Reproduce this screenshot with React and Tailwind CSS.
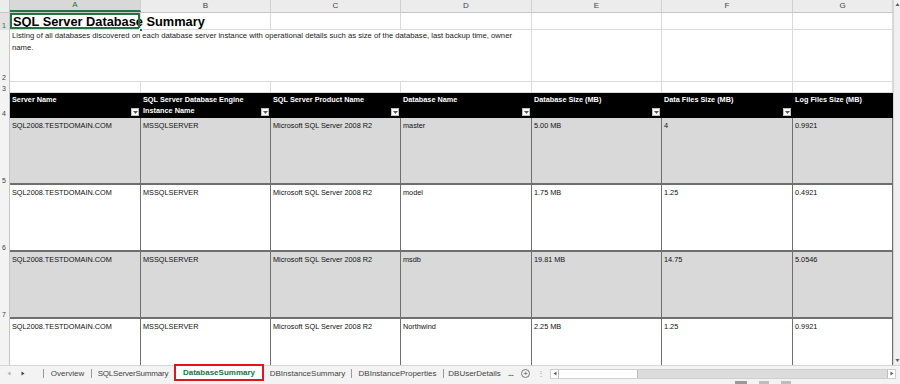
import React from "react";

const W = ["w-[131px]", "w-[130px]", "w-[130px]", "w-[131px]", "w-[130px]", "w-[131px]", "w-[100px]"];
const LETTERS = ["A", "B", "C", "D", "E", "F", "G"];

const HEADERS = [
  ["Server Name"],
  ["SQL Server Database Engine", "Instance Name"],
  ["SQL Server Product Name"],
  ["Database Name"],
  ["Database Size (MB)"],
  ["Data Files Size (MB)"],
  ["Log Files Size (MB)"],
];

const ROWS = [
  { n: 5, gray: true, db: "master", size: "5.00 MB", data: "4", log: "0.9921" },
  { n: 6, gray: false, db: "model", size: "1.75 MB", data: "1.25", log: "0.4921" },
  { n: 7, gray: true, db: "msdb", size: "19.81 MB", data: "14.75", log: "5.0546" },
  { n: 8, gray: false, db: "Northwind", size: "2.25 MB", data: "1.25", log: "0.9921" },
];

function FilterButton() {
  return (
    <div className="absolute right-[2px] bottom-[2px] w-[8px] h-[8px] bg-white border border-[#bfbfbf] flex items-center justify-center">
      <svg width="5" height="3" viewBox="0 0 5 3">
        <path d="M0 0 L5 0 L2.5 3 Z" fill="#595959" />
      </svg>
    </div>
  );
}

function RowNum({ n, h, active }) {
  return (
    <div className={`w-[10px] shrink-0 ${h} flex items-end pl-[2px] pb-[1px] text-[7px] leading-none border-r border-[#c6c6c6] ${active ? "bg-[#e1e1e1] text-[#217346]" : "bg-[#f3f3f3] text-[#444]"}`}>
      {n}
    </div>
  );
}

function BlankRow({ n, h }) {
  return (
    <div className="flex">
      <RowNum n={n} h={h} />
      {W.map((w, i) => (
        <div key={i} className={`${w} ${h} shrink-0 bg-white border-r border-b border-[#dadada]`} />
      ))}
    </div>
  );
}

function Sep() {
  return <div className="h-[9px] border-l border-[#9a9a9a]" />;
}

export default function App() {
  return (
    <div className="w-[900px] h-[384px] overflow-hidden bg-white flex flex-col text-[#000]" style={{ fontFamily: '"Liberation Sans", Arial, sans-serif' }}>
      <div className="flex h-[365px]">
        <div className="flex-1 overflow-hidden flex flex-col">
          {/* column letters */}
          <div className="flex h-[13px] shrink-0 bg-[#ececec] border-b border-[#c6c6c6]">
            <div className="w-[10px] shrink-0 border-r border-[#c6c6c6]" />
            {W.map((w, i) => (
              <div
                key={i}
                className={`${w} shrink-0 flex items-center justify-center text-[8px] border-r border-[#d0d0d0] ${i === 0 ? "bg-[#d8d8d8] text-[#217346] border-b-2 border-b-[#217346]" : "text-[#444]"}`}
              >
                {LETTERS[i]}
              </div>
            ))}
          </div>

          {/* row 1: title */}
          <div className="flex">
            <RowNum n={1} h="h-[17px]" active />
            <div className={`${W[0]} h-[17px] shrink-0 relative border-r border-b border-[#dadada]`}>
              <div className="absolute left-[3px] top-[1px] whitespace-nowrap text-[12.8px] font-bold leading-[15px]">SQL Server Database Summary</div>
              <div className="absolute inset-0 border-2 border-[#217346]" />
              <div className="absolute right-[-3px] bottom-[-3px] w-[4px] h-[4px] bg-[#217346] border border-white" />
            </div>
            {W.slice(1).map((w, i) => (
              <div key={i} className={`${w} h-[17px] shrink-0 border-r border-b border-[#dadada]`} />
            ))}
          </div>

          {/* row 2: description */}
          <div className="flex">
            <RowNum n={2} h="h-[52px]" />
            <div className="w-[522px] h-[52px] shrink-0 border-r border-b border-[#dadada] pl-[2px] pt-[0px] text-[7.7px] leading-[12px] whitespace-nowrap text-[#222]">
              Listing of all databases discovered on each database server instance with operational details such as size of the database, last backup time, owner
              <br />
              name.
            </div>
            {W.slice(4).map((w, i) => (
              <div key={i} className={`${w} h-[52px] shrink-0 border-r border-b border-[#dadada]`} />
            ))}
          </div>

          <BlankRow n={3} h="h-[11px]" />

          {/* row 4: table header */}
          <div className="flex">
            <RowNum n={4} h="h-[25px]" />
            {W.map((w, i) => (
              <div key={i} className={`${w} h-[25px] shrink-0 relative bg-black text-white font-bold text-[7.3px] leading-[11px] pl-[2px] pt-[1px]`}>
                {HEADERS[i].map((t) => (
                  <div key={t} className="whitespace-nowrap">{t}</div>
                ))}
                {i < 6 && <FilterButton />}
              </div>
            ))}
          </div>

          {/* data rows */}
          {ROWS.map((r) => {
            const cells = ["SQL2008.TESTDOMAIN.COM", "MSSQLSERVER", "Microsoft SQL Server 2008 R2", r.db, r.size, r.data, r.log];
            const h = r.n === 8 ? "h-[50px]" : "h-[67px]";
            return (
              <div key={r.n} className="flex">
                <RowNum n={r.n === 8 ? "" : r.n} h={h} />
                {cells.map((c, i) => (
                  <div
                    key={i}
                    className={`${W[i]} ${h} shrink-0 border-r border-[#6f6f6f] ${r.n < 8 ? "border-b-2 border-b-[#6f6f6f]" : ""} ${r.gray ? "bg-[#d9d9d9]" : "bg-white"} pl-[2px] pt-[3px] text-[7.3px] leading-[10px] whitespace-nowrap text-[#111]`}
                  >
                    {c}
                  </div>
                ))}
              </div>
            );
          })}
        </div>

        {/* vertical scrollbar */}
        <div className="w-[7px] shrink-0 bg-[#f0f0f0] border-l border-[#d6d6d6] flex flex-col justify-between items-center py-[2px]">
          <svg width="5" height="5" viewBox="0 0 5 5">
            <path d="M0.5 4 L4.5 4 L2.5 1 Z" fill="#606060" />
          </svg>
          <svg width="5" height="5" viewBox="0 0 5 5">
            <path d="M0.5 1 L4.5 1 L2.5 4 Z" fill="#606060" />
          </svg>
        </div>
      </div>

      {/* sheet tabs + horizontal scrollbar */}
      <div className="h-[16px] shrink-0 flex items-center bg-[#f3f3f3] border-t border-[#d6d6d6] text-[8px] text-[#444]">
        <div className="w-[43px] shrink-0 flex items-center gap-[10px] pl-[7px]">
          <svg width="4" height="5" viewBox="0 0 4 5"><path d="M3.5 0.5 L3.5 4.5 L0.5 2.5 Z" fill="#b0b0b0" /></svg>
          <svg width="4" height="5" viewBox="0 0 4 5"><path d="M0.5 0.5 L0.5 4.5 L3.5 2.5 Z" fill="#404040" /></svg>
        </div>
        <Sep />
        <div className="w-[47px] shrink-0 text-center">Overview</div>
        <Sep />
        <div className="w-[82px] shrink-0 text-center tracking-[-0.2px]">SQLServerSummary</div>
        <div className="h-[17px] w-[90px] shrink-0 -mt-[2px] flex items-center justify-center bg-white border-2 border-[#e0161b] font-bold text-[#217346]">
          DatabaseSummary
        </div>
        <div className="w-[87px] shrink-0 text-center">DBInstanceSummary</div>
        <Sep />
        <div className="w-[91px] shrink-0 text-center">DBInstanceProperties</div>
        <Sep />
        <div className="w-[61px] shrink-0 text-center">DBUserDetails</div>
        <div className="text-[#217346] font-bold tracking-[-0.5px] ml-[3px]">...</div>
        <div className="ml-[8px] w-[9px] h-[9px] rounded-full border border-[#777] flex items-center justify-center text-[8px] leading-none text-[#555]">+</div>
        <div className="ml-[7px] text-[#999] leading-none">⋮</div>
        <div className="ml-[5px] flex-1 h-[10px] flex items-center bg-[#dcdcdc] border border-[#cfcfcf] mr-[4px]">
          <div className="w-[8px] h-full bg-white border-r border-[#bdbdbd] flex items-center justify-center">
            <svg width="4" height="5" viewBox="0 0 4 5"><path d="M3.5 0.5 L3.5 4.5 L0.5 2.5 Z" fill="#606060" /></svg>
          </div>
          <div className="w-[79px] h-full bg-white border-r border-[#bdbdbd]" />
          <div className="flex-1" />
          <div className="w-[8px] h-full bg-white border-l border-[#bdbdbd] flex items-center justify-center">
            <svg width="4" height="5" viewBox="0 0 4 5"><path d="M0.5 0.5 L0.5 4.5 L3.5 2.5 Z" fill="#606060" /></svg>
          </div>
        </div>
      </div>

      {/* status bar */}
      <div className="flex-1 bg-[#f3f3f3] flex items-start pl-[735px] gap-[12px]">
        <div className="w-[12px] h-[3px] bg-[#9a9a9a]" />
        <div className="w-[10px] h-[3px] bg-[#bdbdbd]" />
        <div className="w-[10px] h-[3px] bg-[#bdbdbd]" />
      </div>
    </div>
  );
}
